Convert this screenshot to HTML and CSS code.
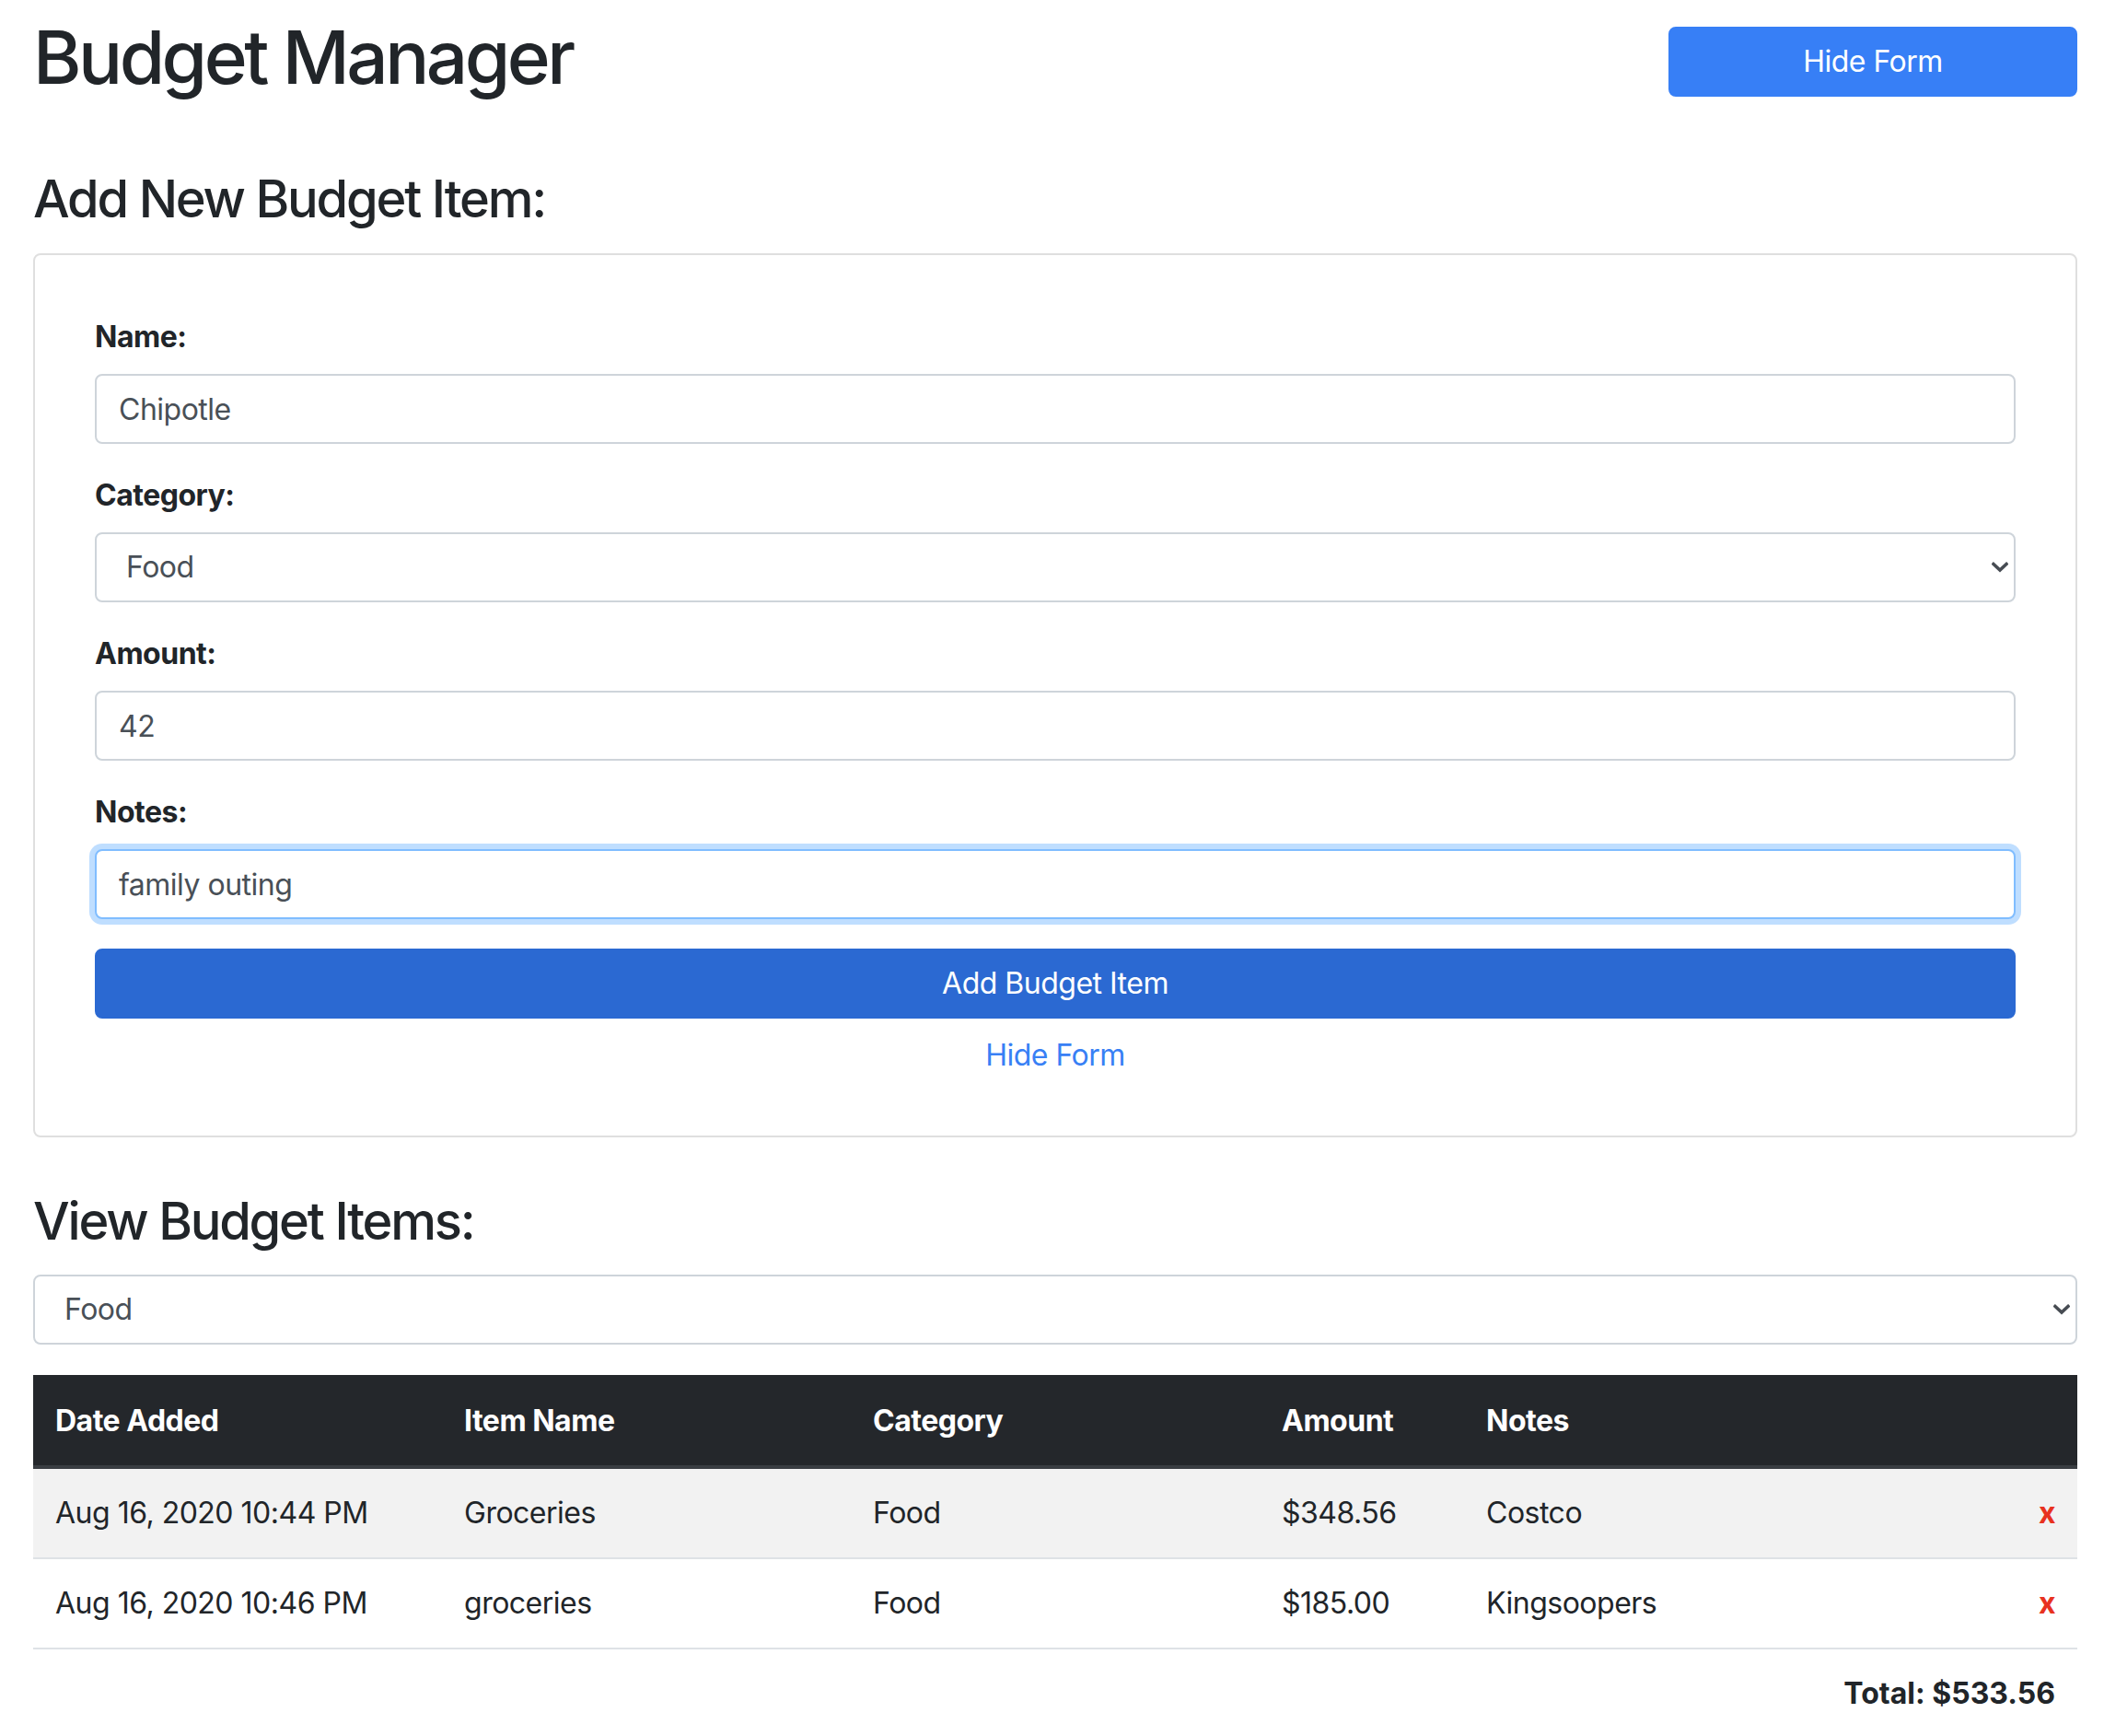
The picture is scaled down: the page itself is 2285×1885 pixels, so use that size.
FILE: index.html
```html
<!DOCTYPE html>
<html lang="en">
<head>
<meta charset="utf-8">
<title>Budget Manager</title>
<link rel="stylesheet" href="styles.css">
</head>
<body>
<div class="container">
  <header class="top">
    <h1 class="title">Budget Manager</h1>
    <button class="btn btn-top" type="button">Hide Form</button>
  </header>

  <h3 class="section-title first">Add New Budget Item:</h3>
  <div class="card">
    <form class="form">
      <div class="group">
        <label class="label">Name:</label>
        <input class="control" type="text" value="Chipotle">
      </div>
      <div class="group">
        <label class="label">Category:</label>
        <div class="select-wrap">
          <select class="control select"><option>Food</option></select>
          <svg class="chev" width="18" height="12" viewBox="0 0 18 12"><path d="M2 2.5 L9 9 L16 2.5" fill="none" stroke="#474c53" stroke-width="3.6" stroke-linecap="square"/></svg>
        </div>
      </div>
      <div class="group">
        <label class="label">Amount:</label>
        <input class="control" type="text" value="42">
      </div>
      <div class="group">
        <label class="label">Notes:</label>
        <input class="control focus" type="text" value="family outing">
      </div>
      <button class="btn btn-add" type="button">Add Budget Item</button>
      <a class="link-btn">Hide Form</a>
    </form>
  </div>

  <h3 class="section-title second">View Budget Items:</h3>
  <div class="select-wrap filter">
    <select class="control select"><option>Food</option></select>
    <svg class="chev" width="18" height="12" viewBox="0 0 18 12"><path d="M2 2.5 L9 9 L16 2.5" fill="none" stroke="#474c53" stroke-width="3.6" stroke-linecap="square"/></svg>
  </div>

  <table class="table">
    <colgroup>
      <col class="c20"><col class="c20"><col class="c20"><col class="c10"><col class="c20"><col class="c10">
    </colgroup>
    <thead>
      <tr><th>Date Added</th><th>Item Name</th><th>Category</th><th>Amount</th><th>Notes</th><th></th></tr>
    </thead>
    <tbody>
      <tr class="striped"><td>Aug 16, 2020 10:44 PM</td><td>Groceries</td><td>Food</td><td>$348.56</td><td>Costco</td><td class="del">x</td></tr>
      <tr><td>Aug 16, 2020 10:46 PM</td><td>groceries</td><td>Food</td><td>$185.00</td><td>Kingsoopers</td><td class="del">x</td></tr>
    </tbody>
    <tfoot>
      <tr><td colspan="6" class="total">Total: $533.56</td></tr>
    </tfoot>
  </table>
</div>
</body>
</html>
```

FILE: styles.css
```css
* { box-sizing: border-box; }
html, body { margin: 0; padding: 0; background: #fff; }
body {
  font-family: Inter, "Noto Sans", "Liberation Sans", sans-serif;
  font-size: 32px;
  line-height: 1.5;
  color: #212529;
  letter-spacing: -0.5px;
}
.container {
  width: 2220px;
  margin-left: 36px;
}
.top {
  display: flex;
  justify-content: space-between;
  align-items: flex-start;
  padding-top: 14px;
}
.title {
  margin: 0;
  font-size: 80px;
  font-weight: 500;
  line-height: 96px;
  letter-spacing: -3.5px;
}
.btn {
  font-family: inherit;
  font-size: 32px;
  line-height: 48px;
  padding: 12px 24px;
  border: 2px solid transparent;
  border-radius: 8px;
  color: #fff;
  cursor: pointer;
  text-align: center;
  letter-spacing: -0.5px;
}
.btn-top {
  width: 444px;
  margin-top: 15px;
  background: #377ff6;
  border-color: #377ff6;
}
.section-title {
  margin: 0;
  font-size: 56px;
  font-weight: 500;
  line-height: 67px;
  letter-spacing: -2.2px;
}
.section-title.first { margin-top: 73px; margin-bottom: 25px; }
.section-title.second { margin-top: 58px; margin-bottom: 24px; }
.card {
  border: 2px solid #dfdfdf;
  border-radius: 8px;
  padding: 65px 65px 46px 65px;
}
.form { display: flex; flex-direction: column; }
.group { margin-bottom: 32px; display: flex; flex-direction: column; }
.label {
  font-weight: 700;
  line-height: 48px;
  margin-bottom: 16px;
}
.control {
  display: block;
  width: 100%;
  height: 76px;
  padding: 12px 24px;
  font-family: inherit;
  font-size: 32px;
  line-height: 48px;
  letter-spacing: -0.5px;
  color: #495057;
  background: #fff;
  border: 2px solid #ced4da;
  border-radius: 8px;
  outline: none;
}
.control.focus {
  border-color: #80bdff;
  box-shadow: 0 0 0 6px rgba(0, 123, 255, 0.25);
}
.select-wrap { position: relative; }
.select {
  -webkit-appearance: none;
  appearance: none;
  padding-left: 32px;
}
.chev {
  position: absolute;
  right: 8px;
  top: 32px;
  pointer-events: none;
}
.btn-add {
  width: 100%;
  background: #2b69d2;
  border-color: #2b69d2;
}
.link-btn {
  display: block;
  padding: 16px 24px 17px;
  line-height: 48px;
  text-align: center;
  color: #3880f5;
  cursor: pointer;
}
.filter { margin-bottom: 33px; }
.table {
  width: 100%;
  border-collapse: collapse;
  table-layout: fixed;
}
.c20 { width: 20%; }
.c10 { width: 10%; }
.table th, .table td {
  padding: 24px;
  line-height: 48px;
  text-align: left;
  vertical-align: top;
}
.table thead th {
  background: #24272b;
  color: #fff;
  font-weight: 700;
  border-top: 2px solid #24272b;
  border-bottom: 4px solid #393d42;
}
.table tbody td { border-top: 2px solid #dee2e6; }
.table tbody tr:first-child td { border-top: none; }
.striped td { background: #f2f2f2; }
.table .del {
  text-align: right;
  color: #e8321f;
  font-weight: 700;
}
.table tfoot td { border-top: 2px solid #dee2e6; }
.table .total {
  text-align: right;
  font-weight: 700;
  letter-spacing: 0;
}
```
